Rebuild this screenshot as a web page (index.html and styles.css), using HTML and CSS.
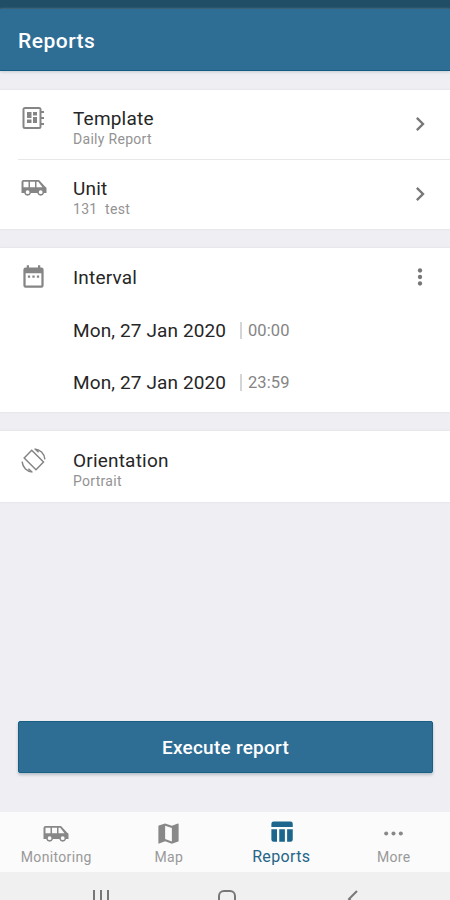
FILE: index.html
```html
<!DOCTYPE html>
<html lang="en">
<head>
<meta charset="utf-8">
<title>Reports</title>
<link rel="stylesheet" href="styles.css">
</head>
<body>

<svg class="symbols">
  <symbol id="van" viewBox="0 0 26 18">
    <path fill-rule="evenodd" d="M2.500 1h15.500l6 6.500 1.500 1.200V14h-2.400a3.500 3.500 0 0 1-6.800 0H10a3.500 3.500 0 0 1-6.800 0H.5V3a2 2 0 0 1 2-2zM2.500 2.800v5.400h5V2.800zM9 2.800v5.400h5V2.800zM15.500 2.800v5.400h6l-4.300-5.400zM6.600 11.300a1.900 1.900 0 1 0 0 3.800 1.900 1.900 0 0 0 0-3.800zM19.700 11.300a1.900 1.900 0 1 0 0 3.800 1.900 1.900 0 0 0 0-3.800z"/>
  </symbol>
  <symbol id="chevron" viewBox="0 0 24 24">
    <path d="M10 6L8.600 7.400 13.200 12l-4.600 4.600L10 18l6-6z"/>
  </symbol>
</svg>

<div class="status-bar"></div>
<header class="header">Reports</header>

<main class="content">
  <section class="card">
    <div class="row">
      <svg class="icon icon-template" viewBox="0 0 22 22"><path fill-rule="evenodd" d="M3 0h14a2.500 2.500 0 0 1 2.500 2.500V4H22v2h-2.500v4H22v2h-2.500v4H22v2h-2.500v1.500A2.500 2.500 0 0 1 17 22H3a2.500 2.500 0 0 1-2.500-2.500v-17A2.500 2.500 0 0 1 3 0zM2.500 2v18h15V2zM5 5h4.500v6H5zM5 12.500h4.500V16H5zM11 5h4v3.500h-4zM11 10h4v6h-4z"/></svg>
      <div class="label">
        <div class="title">Template</div>
        <div class="subtitle">Daily Report</div>
      </div>
      <svg class="action" viewBox="0 0 24 24"><use href="#chevron"/></svg>
    </div>
    <div class="row divided">
      <svg class="icon icon-van"><use href="#van"/></svg>
      <div class="label">
        <div class="title">Unit</div>
        <div class="subtitle">131&nbsp; test</div>
      </div>
      <svg class="action" viewBox="0 0 24 24"><use href="#chevron"/></svg>
    </div>
  </section>

  <section class="card interval">
    <div class="row interval-head">
      <svg class="icon icon-calendar" viewBox="0 0 24 24"><path d="M9 11H7v2h2zm4 0h-2v2h2zm4 0h-2v2h2zm2-7h-1V2h-2v2H8V2H6v2H5a2 2 0 0 0-2 2v14a2 2 0 0 0 2 2h14a2 2 0 0 0 2-2V6a2 2 0 0 0-2-2zm0 16H5V9h14z"/></svg>
      <div class="label"><div class="title">Interval</div></div>
      <svg class="action" viewBox="0 0 24 24"><circle cx="12" cy="6" r="2"/><circle cx="12" cy="12" r="2"/><circle cx="12" cy="18" r="2"/></svg>
    </div>
    <div class="date-row">
      <span class="date">Mon, 27 Jan 2020</span>
      <span class="time">00:00</span>
    </div>
    <div class="date-row">
      <span class="date">Mon, 27 Jan 2020</span>
      <span class="time">23:59</span>
    </div>
  </section>

  <section class="card orientation">
    <div class="row">
      <svg class="icon icon-rotate" viewBox="0 0 25 25"><path d="M10.700 2.300L22.500 14 15 21.700 3.200 10zM13.500 1c5.500.2 9.800 4.500 10.400 10.300M14 1l3.600 3.200M11.500 24C6 23.800 1.700 19.500 1.100 13.700M11 24l-3.600-3.200"/></svg>
      <div class="label">
        <div class="title">Orientation</div>
        <div class="subtitle">Portrait</div>
      </div>
    </div>
  </section>

  <button class="execute">Execute report</button>
</main>

<nav class="tabs">
  <a class="tab">
    <svg class="tab-icon tab-van"><use href="#van"/></svg>
    <span>Monitoring</span>
  </a>
  <a class="tab">
    <svg class="tab-icon" viewBox="0 0 24 24"><path d="M20.500 3l-.16.030L15 5.100 9 3 3.360 4.900a.5.5 0 0 0-.36.480V20.500a.5.5 0 0 0 .66.470L9 18.900l6 2.100 5.640-1.900a.5.5 0 0 0 .36-.48V3.500a.5.5 0 0 0-.5-.5zM15 19l-6-2.110V5l6 2.110z"/></svg>
    <span>Map</span>
  </a>
  <a class="tab active">
    <svg class="tab-icon" viewBox="0 0 24 24"><path d="M10 10h5v11h-5zM17 21h3a2 2 0 0 0 2-2v-9h-5zM20 3H5a2 2 0 0 0-2 2v3h19V5a2 2 0 0 0-2-2zM3 19a2 2 0 0 0 2 2h3V10H3z"/></svg>
    <span>Reports</span>
  </a>
  <a class="tab">
    <svg class="tab-icon" viewBox="0 0 24 24"><circle cx="5.500" cy="12" r="1.800"/><circle cx="12" cy="12" r="1.800"/><circle cx="18.500" cy="12" r="1.800"/></svg>
    <span>More</span>
  </a>
</nav>

<footer class="system-bar">
  <svg viewBox="0 0 18 18"><path d="M2 0v18M9 0v18M16 0v18"/></svg>
  <svg viewBox="0 0 18 18"><rect x="1" y="1" width="16" height="16" rx="5"/></svg>
  <svg viewBox="0 0 18 18"><path d="M13 1L5 9l8 8"/></svg>
</footer>

</body>
</html>
```
FILE: styles.css
```css
* {
  box-sizing: border-box;
}

body {
  margin: 0;
  height: 900px;
  display: flex;
  flex-direction: column;
  overflow: hidden;
  background: #eeeef3;
  color: #262626;
  font-family: Roboto, "Liberation Sans", sans-serif;
}

svg {
  display: block;
  fill: currentColor;
}

.symbols {
  display: none;
}

.status-bar {
  height: 9px;
  flex: none;
  background: #204e66;
}

.header {
  height: 62px;
  flex: none;
  padding-left: 18px;
  background: #2e6d94;
  border-bottom: 1px solid #135b80;
  box-shadow: 0 1px 3px #c5cbd2;
  color: #fff;
  font-size: 21px;
  font-weight: 500;
  line-height: 65px;
  letter-spacing: 0.5px;
}

.content {
  flex: 1;
  display: flex;
  flex-direction: column;
  gap: 19px;
  padding: 19px 0 39px;
}

.card {
  background: #fff;
  box-shadow: 0 0 2px #d9d9dd;
}

.row {
  position: relative;
  display: flex;
  height: 70px;
  padding: 0 16px 0 19px;
}

.divided {
  height: 69px;
}

.divided::before {
  content: "";
  position: absolute;
  top: -1px;
  left: 18px;
  right: 0;
  height: 1px;
  background: #e8e8ea;
}

.icon {
  flex: none;
  color: #858585;
}

.icon-template {
  width: 22px;
  height: 22px;
  margin: 17px 3px 0;
}

.icon-van {
  width: 26px;
  height: 18px;
  margin: 19px 0 0 2px;
}

.icon-calendar {
  width: 27px;
  height: 27px;
  margin: 15px 0 0 1px;
}

.icon-rotate {
  width: 25px;
  height: 25px;
  margin: 17px 1px 0 2px;
  fill: none;
  stroke: currentColor;
  stroke-width: 1.5;
}

.label {
  flex: 1;
  margin: 18px 0 0 26px;
}

.title {
  height: 22px;
  font-size: 19px;
  line-height: 22px;
  letter-spacing: 0.2px;
}

.subtitle {
  color: #939393;
  font-size: 14px;
  line-height: 18px;
  letter-spacing: 0.3px;
}

.action {
  width: 28px;
  height: 28px;
  margin-top: 20px;
  color: #777;
}

.interval {
  height: 164px;
}

.interval-head {
  height: 56px;
}

.interval-head .label {
  margin-top: 19px;
}

.interval-head .action {
  width: 26px;
  margin: 15px 1px 0 0;
}

.date-row {
  display: flex;
  align-items: center;
  height: 52px;
  padding-left: 73px;
}

.date {
  width: 167px;
  font-size: 19px;
  letter-spacing: 0.12px;
}

.time {
  padding-left: 6px;
  border-left: 2px solid #d5d5d5;
  color: #858585;
  font-size: 16.5px;
  line-height: 17px;
  letter-spacing: 0.1px;
}

.orientation .label {
  margin-top: 19px;
}

.orientation .row {
  height: 71px;
}

.execute {
  height: 52px;
  margin: auto 17px 0 18px;
  padding: 0;
  border: 1px solid #176084;
  border-radius: 2px;
  background: #2e6d94;
  box-shadow: 0 2px 3px #b7bec5;
  color: #fff;
  font: 500 19px Roboto, "Liberation Sans", sans-serif;
  letter-spacing: 0.25px;
}

.tabs {
  display: grid;
  grid-template-columns: repeat(4, 1fr);
  height: 60px;
  flex: none;
  background: #fbfbfb;
}

.tab {
  display: flex;
  flex-direction: column;
  align-items: center;
  color: #999;
  font-size: 14px;
  line-height: 18px;
  letter-spacing: 0.35px;
}

.tab-icon {
  width: 27px;
  height: 27px;
  margin: 8px 0 1px;
  color: #888;
}

.tab-van {
  width: 26px;
  height: 18px;
  margin: 13px 0 5px;
}

.active {
  color: #256587;
  font-size: 16px;
}

.active .tab-icon {
  margin: 6px 0 3px;
  color: #1c668d;
}

.system-bar {
  display: flex;
  justify-content: space-between;
  height: 28px;
  flex: none;
  padding: 18px 88px 0 92px;
  background: #f0f0f0;
}

.system-bar svg {
  width: 18px;
  height: 18px;
  fill: none;
  stroke: #777;
  stroke-width: 2;
}
```
